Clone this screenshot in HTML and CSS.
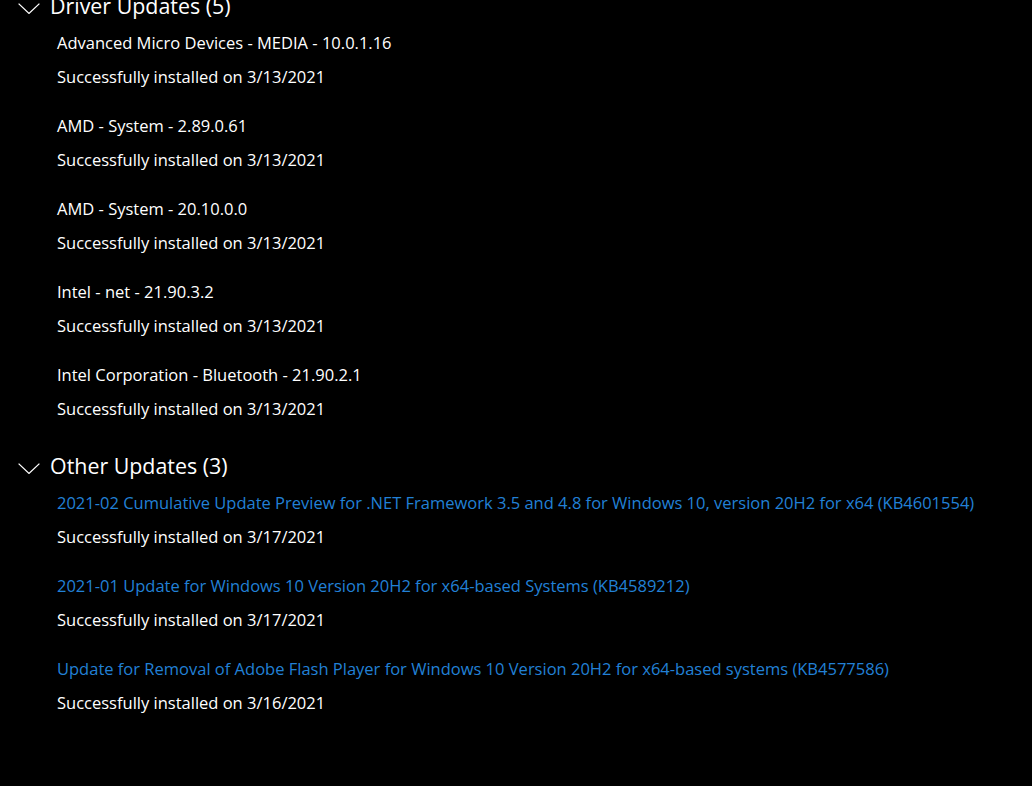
FILE: index.html
```html
<!DOCTYPE html>
<html lang="en">
<head>
<meta charset="utf-8">
<title>Update history</title>
<link rel="stylesheet" href="styles.css">
</head>
<body>
<main class="history">
  <section class="group group-first">
    <h2 class="group-head">
      <svg class="chev" viewBox="0 0 22 11" width="22" height="11"><path d="M0.6 0.6 L11 10.4 L21.4 0.6" fill="none" stroke="#fff" stroke-width="1.3"/></svg>
      <span>Driver Updates (5)</span>
    </h2>
    <ul class="items">
      <li class="item"><div class="title">Advanced Micro Devices - MEDIA - 10.0.1.16</div><div class="status">Successfully installed on 3/13/2021</div></li>
      <li class="item"><div class="title">AMD - System - 2.89.0.61</div><div class="status">Successfully installed on 3/13/2021</div></li>
      <li class="item"><div class="title">AMD - System - 20.10.0.0</div><div class="status">Successfully installed on 3/13/2021</div></li>
      <li class="item"><div class="title">Intel - net - 21.90.3.2</div><div class="status">Successfully installed on 3/13/2021</div></li>
      <li class="item"><div class="title">Intel Corporation - Bluetooth - 21.90.2.1</div><div class="status">Successfully installed on 3/13/2021</div></li>
    </ul>
  </section>
  <section class="group">
    <h2 class="group-head">
      <svg class="chev" viewBox="0 0 22 11" width="22" height="11"><path d="M0.6 0.6 L11 10.4 L21.4 0.6" fill="none" stroke="#fff" stroke-width="1.3"/></svg>
      <span>Other Updates (3)</span>
    </h2>
    <ul class="items">
      <li class="item"><a class="title link" href="#">2021-02 Cumulative Update Preview for .NET Framework 3.5 and 4.8 for Windows 10, version 20H2 for x64 (KB4601554)</a><div class="status">Successfully installed on 3/17/2021</div></li>
      <li class="item"><a class="title link" href="#">2021-01 Update for Windows 10 Version 20H2 for x64-based Systems (KB4589212)</a><div class="status">Successfully installed on 3/17/2021</div></li>
      <li class="item"><a class="title link" href="#">Update for Removal of Adobe Flash Player for Windows 10 Version 20H2 for x64-based systems (KB4577586)</a><div class="status">Successfully installed on 3/16/2021</div></li>
    </ul>
  </section>
</main>
</body>
</html>
```

FILE: styles.css
```css
html, body {
  margin: 0;
  padding: 0;
  background: #000;
  color: #fff;
  font-family: "Open Sans", "Noto Sans", "Liberation Sans", sans-serif;
  height: 100%;
  overflow: hidden;
}

.history {
  padding-left: 18px;
}

.group-first {
  margin-top: -9px;
}

.group + .group {
  margin-top: 25px;
}

.group-head {
  display: flex;
  align-items: center;
  gap: 10px;
  margin: 0;
  height: 30px;
  font-size: 21.4px;
  font-weight: 400;
  line-height: 30px;
}

.chev {
  display: block;
  margin-top: 4px;
}

.items {
  list-style: none;
  margin: 5px 0 0;
  padding: 0 0 0 39px;
}

.item + .item {
  margin-top: 15px;
}

.title,
.status {
  display: block;
  font-size: 16.5px;
  line-height: 34px;
  height: 34px;
  white-space: nowrap;
}

.link {
  color: #2280d6;
  text-decoration: none;
}
```
